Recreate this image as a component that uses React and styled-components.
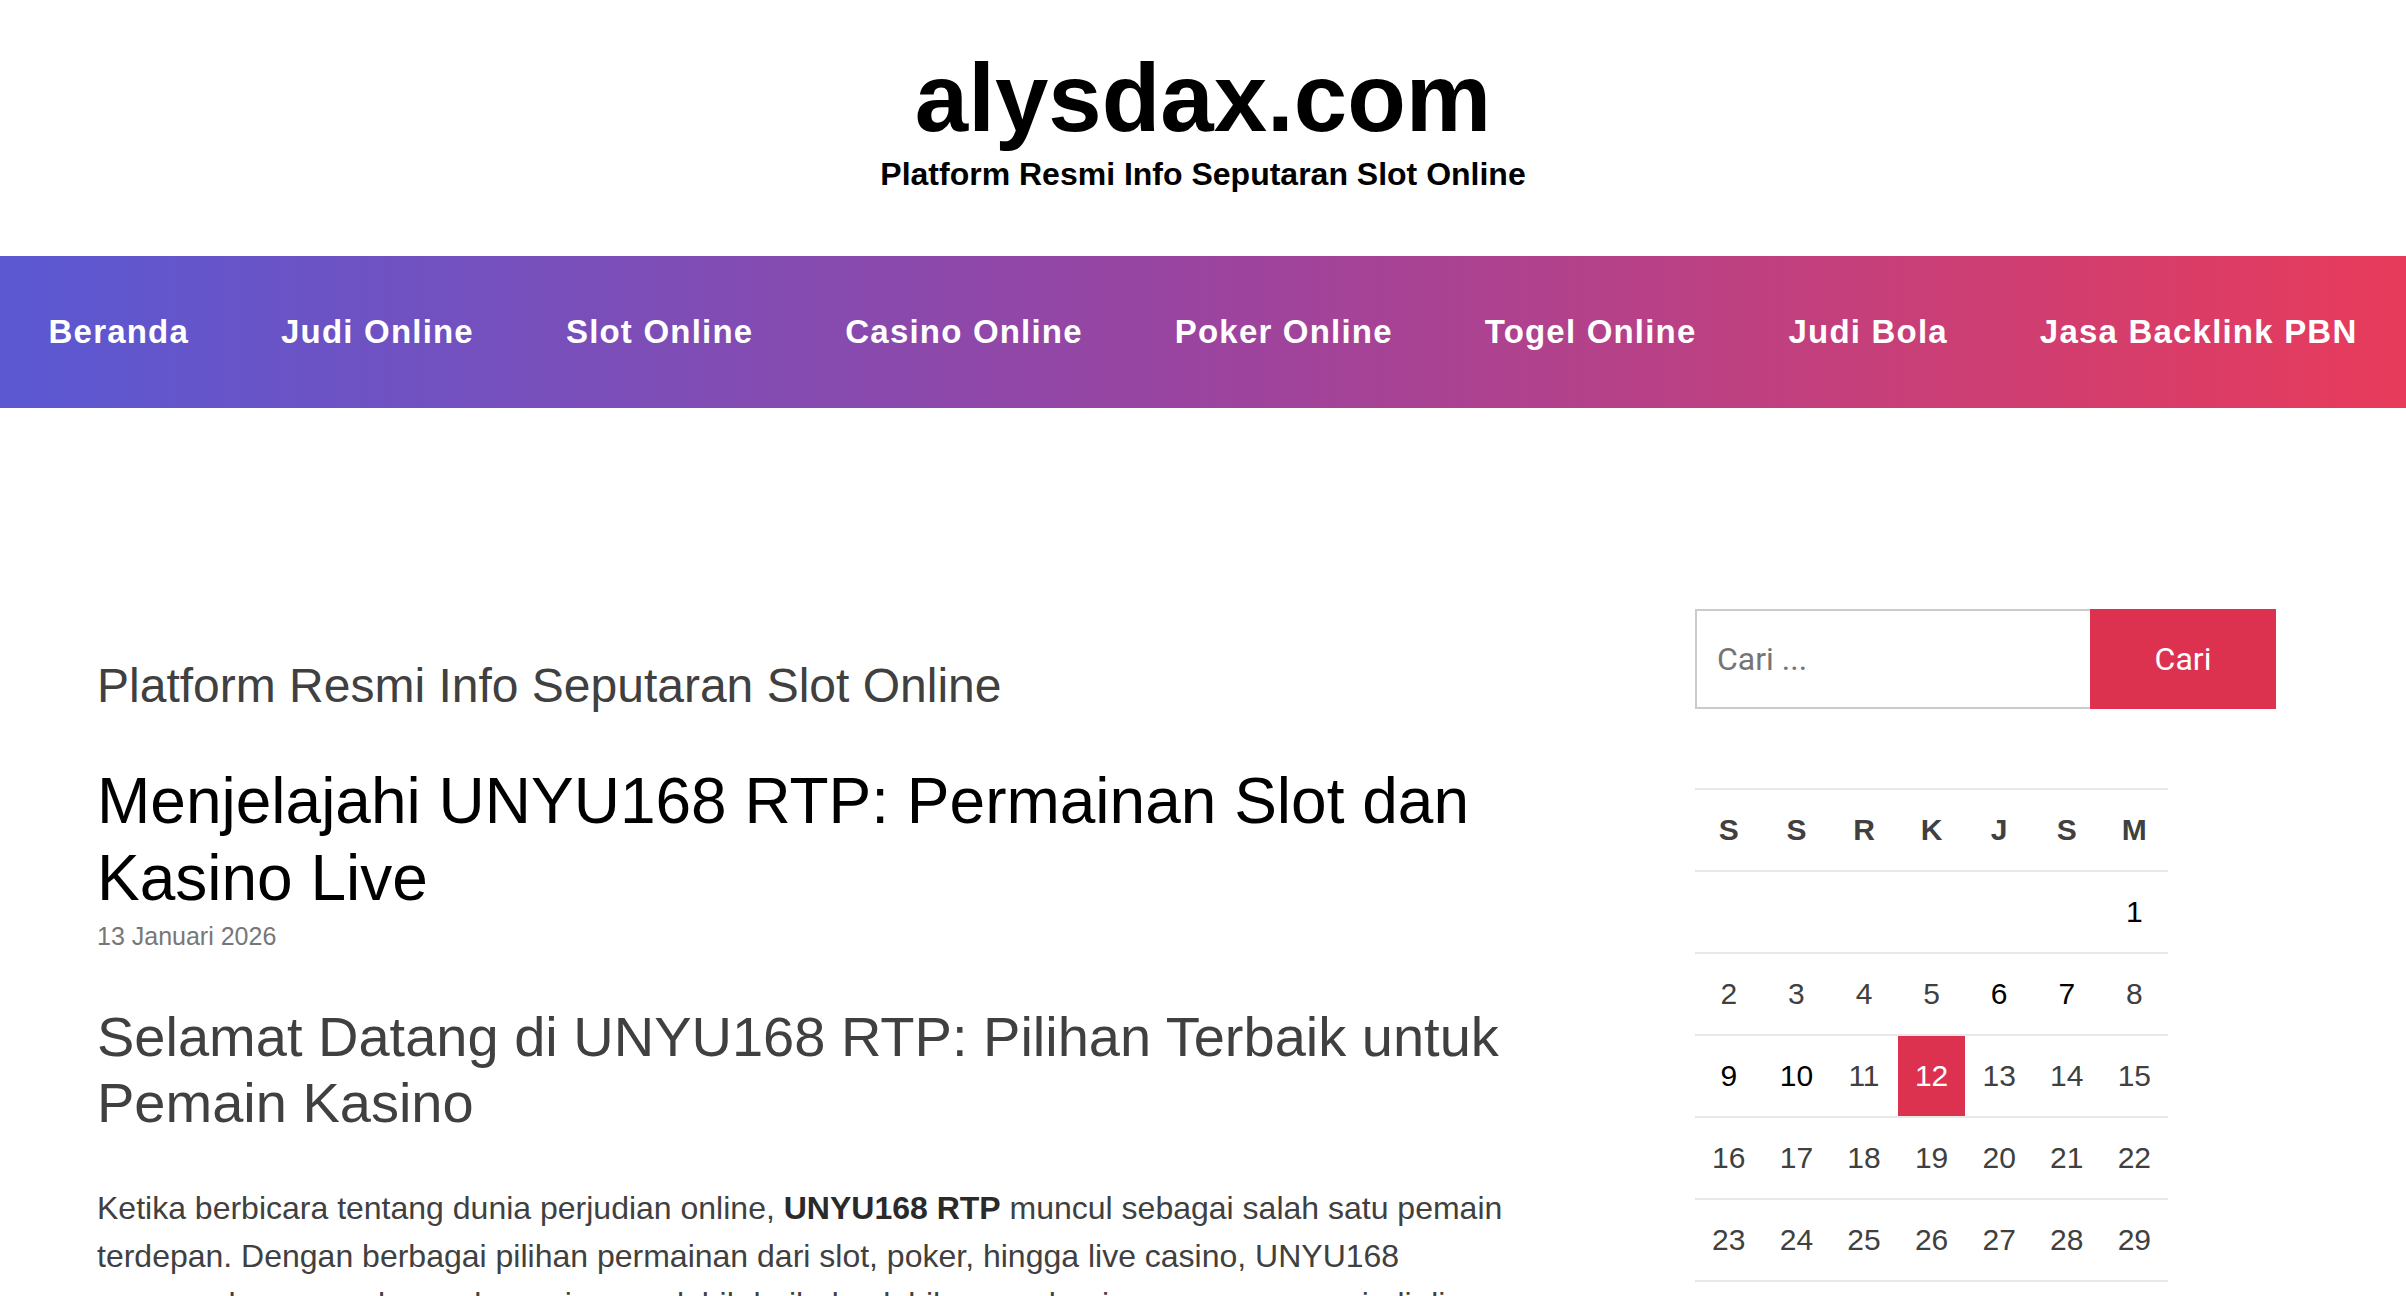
import React from "react";
import styled, { createGlobalStyle } from "styled-components";

const GlobalStyle = createGlobalStyle`
  * {
    box-sizing: border-box;
  }

  body {
    margin: 0;
    background: #fff;
    font-family: "Liberation Sans", Arial, Helvetica, sans-serif;
    color: #404040;
  }
`;

const Header = styled.header`
  height: 256px;
  padding-top: 45px;
  text-align: center;
`;

const SiteTitle = styled.h1`
  margin: 0;
  font-size: 96px;
  line-height: 1.1;
  font-weight: 700;
  color: #000;
`;

const Tagline = styled.p`
  margin: 2px 0 0;
  font-size: 32px;
  line-height: 1.35;
  font-weight: 700;
  color: #000;
`;

const Nav = styled.nav`
  height: 152px;
  display: flex;
  align-items: center;
  justify-content: center;
  gap: 92px;
  background: linear-gradient(to right, #5a58d2, #9b44a0, #e83b5b);
`;

const NavLink = styled.a`
  font-size: 33px;
  font-weight: 700;
  letter-spacing: 1.2px;
  color: #fff;
  text-decoration: none;
  white-space: nowrap;
`;

const Layout = styled.div`
  display: grid;
  grid-template-columns: 1fr 581px;
  column-gap: 165px;
  padding: 201px 130px 0 97px;
`;

const Main = styled.main`
  padding-top: 48px;
`;

const PageHeading = styled.h1`
  margin: 0;
  font-size: 48px;
  line-height: 57.6px;
  font-weight: 400;
  color: #404040;
`;

const PostTitle = styled.h2`
  margin: 48px 0 0;
  font-size: 64px;
  line-height: 77px;
  font-weight: 400;
  color: #000;
`;

const PostDate = styled.div`
  margin-top: 2px;
  font-size: 25px;
  line-height: 35px;
  color: #777;
`;

const SubHeading = styled.h3`
  margin: 50px 0 0;
  font-size: 56px;
  line-height: 66px;
  font-weight: 400;
  color: #404040;
`;

const Paragraph = styled.p`
  margin: 48px 0 0;
  font-size: 32px;
  line-height: 48px;
  color: #404040;

  strong {
    color: #2a2a2a;
  }
`;

const Sidebar = styled.aside``;

const SearchForm = styled.form`
  display: flex;
  height: 100px;
`;

const SearchInput = styled.input`
  flex: 1;
  min-width: 0;
  height: 100%;
  padding: 0 20px;
  border: 2px solid #cbcbcb;
  border-right: none;
  font-family: Roboto, "Liberation Sans", sans-serif;
  font-size: 32px;
  color: #404040;
  outline: none;

  &::placeholder {
    color: #757575;
  }
`;

const SearchButton = styled.button`
  width: 186px;
  height: 100%;
  border: none;
  background: #dc3250;
  color: #fff;
  font-family: Roboto, "Liberation Sans", sans-serif;
  font-size: 32px;
`;

const Calendar = styled.table`
  margin-top: 79px;
  border-collapse: collapse;
`;

const Row = styled.tr`
  border-top: 2px solid #e8e8e8;
  border-bottom: 2px solid #e8e8e8;
`;

const DayHead = styled.th`
  width: 67.6px;
  height: 82px;
  padding: 0;
  text-align: center;
  font-size: 30px;
  font-weight: 700;
  color: #404040;
`;

const Day = styled.td`
  width: 67.6px;
  height: 82px;
  padding: 0;
  text-align: center;
  font-size: 30px;
  color: ${(props) => (props.$today ? "#fff" : props.$linked ? "#000" : "#404040")};
  background: ${(props) => (props.$today ? "#dc3250" : "transparent")};
`;

const navItems = [
  "Beranda",
  "Judi Online",
  "Slot Online",
  "Casino Online",
  "Poker Online",
  "Togel Online",
  "Judi Bola",
  "Jasa Backlink PBN",
];

const weekDays = ["S", "S", "R", "K", "J", "S", "M"];

const weeks = [
  [null, null, null, null, null, null, 1],
  [2, 3, 4, 5, 6, 7, 8],
  [9, 10, 11, 12, 13, 14, 15],
  [16, 17, 18, 19, 20, 21, 22],
  [23, 24, 25, 26, 27, 28, 29],
  [30, 31, null, null, null, null, null],
];

const linkedDays = [1, 6, 7, 9, 10];
const today = 12;

const App = () => {
  return (
    <>
      <GlobalStyle />
      <Header>
        <SiteTitle>alysdax.com</SiteTitle>
        <Tagline>Platform Resmi Info Seputaran Slot Online</Tagline>
      </Header>
      <Nav>
        {navItems.map((item) => (
          <NavLink key={item} href="#">
            {item}
          </NavLink>
        ))}
      </Nav>
      <Layout>
        <Main>
          <PageHeading>Platform Resmi Info Seputaran Slot Online</PageHeading>
          <article>
            <PostTitle>Menjelajahi UNYU168 RTP: Permainan Slot dan Kasino Live</PostTitle>
            <PostDate>13 Januari 2026</PostDate>
            <SubHeading>
              Selamat Datang di UNYU168 RTP: Pilihan Terbaik untuk Pemain Kasino
            </SubHeading>
            <Paragraph>
              Ketika berbicara tentang dunia perjudian online, <strong>UNYU168 RTP</strong>{" "}
              muncul sebagai salah satu pemain terdepan. Dengan berbagai pilihan permainan
              dari slot, poker, hingga live casino, UNYU168 menawarkan pengalaman bermain
              yang lebih baik dan lebih aman bagi para penggemar judi di Dunia maya.
            </Paragraph>
          </article>
        </Main>
        <Sidebar>
          <SearchForm onSubmit={(e) => e.preventDefault()}>
            <SearchInput type="search" placeholder="Cari ..." />
            <SearchButton type="submit">Cari</SearchButton>
          </SearchForm>
          <Calendar>
            <thead>
              <Row>
                {weekDays.map((d, i) => (
                  <DayHead key={i}>{d}</DayHead>
                ))}
              </Row>
            </thead>
            <tbody>
              {weeks.map((week, w) => (
                <Row key={w}>
                  {week.map((day, i) => (
                    <Day
                      key={i}
                      $today={day === today}
                      $linked={linkedDays.includes(day)}
                    >
                      {day}
                    </Day>
                  ))}
                </Row>
              ))}
            </tbody>
          </Calendar>
        </Sidebar>
      </Layout>
    </>
  );
};

export default App;
